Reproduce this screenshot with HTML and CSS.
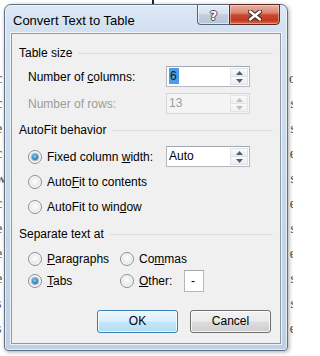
FILE: index.html
```html
<!DOCTYPE html>
<html>
<head>
<meta charset="utf-8">
<title>Convert Text to Table</title>
<link rel="stylesheet" href="styles.css">
</head>
<body>
<div class="doc">
  <div class="doc-rule"></div>
  <div class="doc-rows">
    <div class="doc-row"><span class="l">c</span><span class="r">o</span></div>
    <div class="doc-row"><span class="l">c</span><span class="r">s</span></div>
    <div class="doc-row"><span class="l">e</span><span class="r">s</span></div>
    <div class="doc-row"><span class="l">c</span><span class="r">e</span></div>
    <div class="doc-row"><span class="l">w</span><span class="r">s</span></div>
    <div class="doc-row"><span class="l">c</span><span class="r">e</span></div>
    <div class="doc-row"><span class="l">e</span><span class="r">s</span></div>
    <div class="doc-row"><span class="l">e</span><span class="r">e</span></div>
    <div class="doc-row"><span class="l">e</span><span class="r">s</span></div>
    <div class="doc-row"><span class="l">s</span><span class="r">s</span></div>
    <div class="doc-row"><span class="l">s</span><span class="r">e</span></div>
  </div>
</div>

<div class="window">
  <div class="titlebar">
    <div class="title">Convert Text to Table</div>
    <div class="caption">
      <div class="cap-btn help"><span class="help-glyph">?</span></div>
      <div class="cap-btn close">
        <svg width="14" height="11" viewBox="0 0 14 11">
          <path d="M2 1.5 L12 9.5 M12 1.5 L2 9.5" stroke="#3b2620" stroke-width="4.4" stroke-linecap="round" fill="none"/>
          <path d="M2 1.5 L12 9.5 M12 1.5 L2 9.5" stroke="#ffffff" stroke-width="2.4" stroke-linecap="round" fill="none"/>
        </svg>
      </div>
    </div>
  </div>

  <div class="client">
    <div class="legend">Table size</div>
    <div class="field-row first">
      <span class="field-label">Number of <u>c</u>olumns:</span>
      <div class="spin">
        <span class="val"><span class="sel">6</span></span>
        <div class="arrows">
          <span class="arr"><svg width="7" height="4" viewBox="0 0 7 4"><path d="M0 4 L3.5 0 L7 4 Z" fill="#4b5f80"/></svg></span>
          <span class="arr"><svg width="7" height="4" viewBox="0 0 7 4"><path d="M0 0 L7 0 L3.5 4 Z" fill="#4b5f80"/></svg></span>
        </div>
      </div>
    </div>
    <div class="field-row second">
      <span class="field-label disabled">Number of rows:</span>
      <div class="spin off">
        <span class="val">13</span>
        <div class="arrows">
          <span class="arr"><svg width="7" height="4" viewBox="0 0 7 4"><path d="M0 4 L3.5 0 L7 4 Z" fill="#b9bec6"/></svg></span>
          <span class="arr"><svg width="7" height="4" viewBox="0 0 7 4"><path d="M0 0 L7 0 L3.5 4 Z" fill="#b9bec6"/></svg></span>
        </div>
      </div>
    </div>

    <div class="legend sec">AutoFit behavior</div>
    <div class="radio-row first-radio">
      <span class="radio on"></span>
      <span class="radio-label wide">Fixed column <u>w</u>idth:</span>
      <div class="spin">
        <span class="val">Auto</span>
        <div class="arrows">
          <span class="arr"><svg width="7" height="4" viewBox="0 0 7 4"><path d="M0 4 L3.5 0 L7 4 Z" fill="#4b5f80"/></svg></span>
          <span class="arr"><svg width="7" height="4" viewBox="0 0 7 4"><path d="M0 0 L7 0 L3.5 4 Z" fill="#4b5f80"/></svg></span>
        </div>
      </div>
    </div>
    <div class="radio-row">
      <span class="radio"></span>
      <span class="radio-label">Auto<u>F</u>it to contents</span>
    </div>
    <div class="radio-row">
      <span class="radio"></span>
      <span class="radio-label">AutoFit to win<u>d</u>ow</span>
    </div>

    <div class="legend third">Separate text at</div>
    <div class="sep-grid">
      <div class="radio-cell">
        <span class="radio"></span>
        <span class="radio-label"><u>P</u>aragraphs</span>
      </div>
      <div class="radio-cell">
        <span class="radio"></span>
        <span class="radio-label">Co<u>m</u>mas</span>
      </div>
      <div class="radio-cell tall">
        <span class="radio on"></span>
        <span class="radio-label"><u>T</u>abs</span>
      </div>
      <div class="radio-cell tall">
        <span class="radio"></span>
        <span class="radio-label other"><u>O</u>ther:</span>
        <span class="other-box">-</span>
      </div>
    </div>

    <div class="buttons">
      <div class="btn default">OK</div>
      <div class="btn">Cancel</div>
    </div>
  </div>
</div>
</body>
</html>
```

FILE: styles.css
```css
html, body {
  margin: 0;
  padding: 0;
}

body {
  width: 293px;
  height: 356px;
  overflow: hidden;
  position: relative;
  background: #ffffff;
  font-family: "Liberation Sans", Arial, sans-serif;
  font-size: 12px;
  color: #000;
}

/* ---------- document behind the dialog ---------- */
.doc {
  width: 293px;
  height: 356px;
}

.doc-rule {
  margin-left: 152px;
  width: 2px;
  height: 8px;
  background: #1c2536;
}

.doc-rows {
  padding-top: 58px;
}

.doc-row {
  height: 25px;
  display: flex;
  justify-content: space-between;
  font-family: "Liberation Serif", serif;
  font-size: 14px;
  line-height: 25px;
  color: #4a4a4a;
  overflow: hidden;
}

.doc-row .l {
  margin-left: -4px;
}

.doc-row .r {
  margin-right: -3px;
}

/* ---------- window frame ---------- */
.window {
  position: absolute;
  left: 4px;
  top: 4px;
  width: 284px;
  height: 347px;
  box-sizing: border-box;
  border: 1px solid #5f6f84;
  border-radius: 7px 7px 4px 4px;
  background: linear-gradient(180deg, #dce8f5 0, #d2e0f0 26px, #c7d7ea 55%, #bfd0e4 100%);
  padding: 0 6px 6px;
  display: flex;
  flex-direction: column;
  box-shadow: inset 0 0 0 1px rgba(255, 255, 255, 0.6), 1px 1px 4px rgba(0, 0, 0, 0.35);
}

.titlebar {
  height: 28px;
  position: relative;
  flex: none;
}

.title {
  padding: 8px 0 0 2px;
  font-size: 13px;
  line-height: 16px;
  color: #000;
}

.caption {
  position: absolute;
  top: -1px;
  right: 1px;
  display: flex;
}

.cap-btn {
  height: 21px;
  box-sizing: border-box;
  display: flex;
  align-items: center;
  justify-content: center;
}

.help {
  width: 32px;
  border: 1px solid #56677d;
  border-right: none;
  border-radius: 0 0 0 4px;
  background: linear-gradient(180deg, #e5ecf4 0, #d7e1ec 45%, #c1cedd 52%, #b7c5d6 100%);
  box-shadow: inset 0 0 0 1px rgba(255, 255, 255, 0.55);
}

.help-glyph {
  font-family: "DejaVu Sans", sans-serif;
  font-weight: bold;
  font-size: 13px;
  line-height: 13px;
  color: #fff;
  padding-top: 1px;
  text-shadow: 1px 0 0 #3e4d60, -1px 0 0 #3e4d60, 0 1px 0 #3e4d60, 0 -1px 0 #3e4d60;
}

.close {
  width: 51px;
  border: 1px solid #5a2a1f;
  border-radius: 0 0 4px 0;
  background: linear-gradient(180deg, #eab2a4 0, #dc8470 42%, #c94a30 52%, #c23a20 80%, #d56a50 100%);
  box-shadow: inset 0 0 0 1px rgba(255, 255, 255, 0.35);
  padding-top: 2px;
}

/* ---------- client area ---------- */
.client {
  flex: 1;
  background: #f0f0f0;
  border: 1px solid #8b99ab;
  box-shadow: 0 0 0 1px rgba(255, 255, 255, 0.7);
  padding: 12px 7px 10px 7px;
  display: flex;
  flex-direction: column;
}

.legend {
  display: flex;
  align-items: center;
  height: 15px;
  line-height: 15px;
  white-space: nowrap;
}

.legend::after {
  content: "";
  flex: 1;
  height: 1px;
  background: #d5dfe5;
  margin-left: 6px;
}

.legend.sec {
  margin-top: 9px;
}

.legend.third {
  margin-top: 10px;
}

.field-row {
  display: flex;
  align-items: center;
  height: 21px;
  padding-left: 9px;
}

.field-row.first {
  margin-top: 5px;
}

.field-row.second {
  margin-top: 6px;
}

.field-label {
  width: 138px;
  flex: none;
}

.disabled {
  color: #9d9d9d;
}

/* spin box */
.spin {
  width: 84px;
  height: 21px;
  box-sizing: border-box;
  border: 1px solid #b4b7bd;
  border-top-color: #a5a8ae;
  background: #fff;
  display: flex;
  flex: none;
}

.spin .val {
  flex: 1;
  padding-left: 2px;
  line-height: 19px;
}

.spin .sel {
  display: inline-block;
  background: #4b9de9;
  color: #0a1a35;
  padding: 0 2px 0 1px;
  line-height: 16px;
}

.spin .arrows {
  width: 18px;
  display: flex;
  flex-direction: column;
  padding: 1px 1px 1px 0;
}

.arr {
  flex: 1;
  display: flex;
  align-items: center;
  justify-content: center;
  border: 1px solid #dfe3e8;
  background: linear-gradient(180deg, #fbfbfb, #ececec);
}

.arr + .arr {
  border-top: none;
}

.spin.off {
  background: #f4f4f4;
  border-color: #d2d5da;
}

.spin.off .val {
  color: #9d9d9d;
}

.spin.off .arr {
  border-color: #e3e5e8;
  background: linear-gradient(180deg, #f8f8f8, #efefef);
}

/* radios */
.radio-row {
  display: flex;
  align-items: center;
  height: 21px;
  padding-left: 9px;
  margin-top: 4px;
}

.radio-row.first-radio {
  margin-top: 8px;
}

.radio {
  width: 14px;
  height: 14px;
  box-sizing: border-box;
  flex: none;
  border-radius: 50%;
  border: 1px solid #8e8f8f;
  background: radial-gradient(circle at 50% 45%, #ffffff 0, #f1f1f1 35%, #d4d6d9 100%);
  box-shadow: inset 0 0 0 1px rgba(255, 255, 255, 0.8);
  display: flex;
  align-items: center;
  justify-content: center;
}

.radio.on::after {
  content: "";
  width: 6px;
  height: 6px;
  border-radius: 50%;
  background: radial-gradient(circle at 45% 40%, #9bd8f8 0, #3a93d2 45%, #114c86 100%);
  box-shadow: 0 0 0 1px rgba(30, 70, 120, 0.35);
}

.radio-label {
  margin-left: 5px;
  white-space: nowrap;
}

.radio-label.wide {
  width: 119px;
  flex: none;
}

.sep-grid {
  display: grid;
  grid-template-columns: 92px auto;
  grid-template-rows: 21px 22px;
  row-gap: 1px;
  padding-left: 9px;
  margin-top: 6px;
}

.radio-cell {
  display: flex;
  align-items: center;
}

.radio-label.other {
  width: 45px;
  flex: none;
}

.other-box {
  width: 20px;
  height: 22px;
  box-sizing: border-box;
  border: 1px solid #b4b7bd;
  border-top-color: #a5a8ae;
  background: #fff;
  line-height: 20px;
  padding-left: 6px;
}

/* buttons */
.buttons {
  margin-top: auto;
  display: flex;
  justify-content: flex-end;
  gap: 12px;
  padding-right: 2px;
}

.btn {
  width: 81px;
  height: 23px;
  box-sizing: border-box;
  border: 1px solid #707070;
  border-radius: 3px;
  background: linear-gradient(180deg, #f2f2f2 0, #ebebeb 48%, #dddddd 52%, #cfcfcf 100%);
  box-shadow: inset 0 0 0 1px rgba(255, 255, 255, 0.75);
  text-align: center;
  line-height: 21px;
}

.btn.default {
  border-color: #3c7fb1;
  background: linear-gradient(180deg, #eaf6fd 0, #dcf0fc 48%, #c5e7fb 52%, #b3dcf4 100%);
}
```
